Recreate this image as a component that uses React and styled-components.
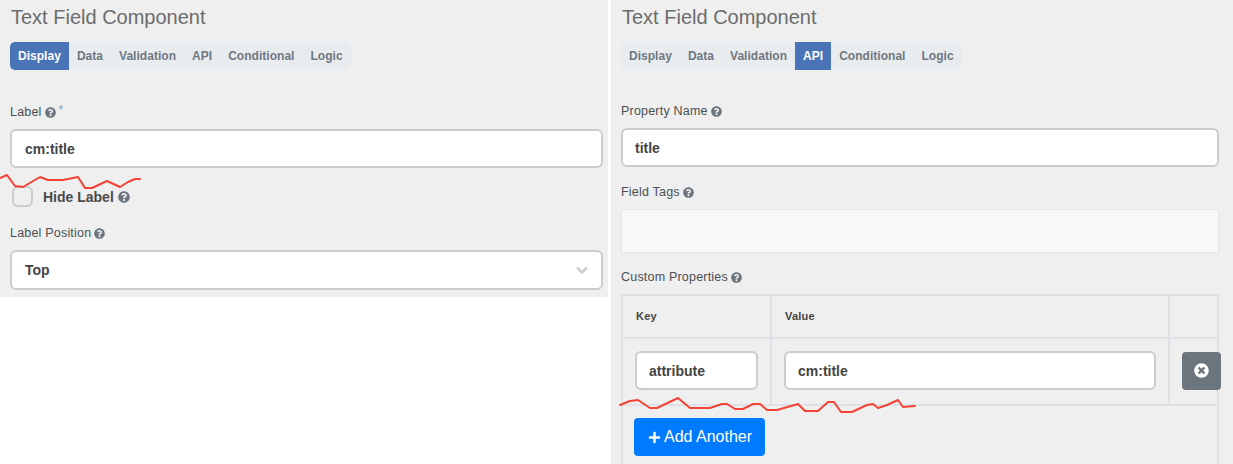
import * as React from 'react';
import styled, { createGlobalStyle } from 'styled-components';
import { FaQuestionCircle, FaTimesCircle, FaPlus } from 'react-icons/fa';

const GlobalStyle = createGlobalStyle`
* { box-sizing: border-box; }
body {
    margin: 0;
    background: #fff;
    font-family: "Liberation Sans", Arial, sans-serif;
}
`;

const Page = styled.div`
display: flex;
gap: 3px;
width: 1233px;
height: 464px;
overflow: hidden;
align-items: flex-start;
`;

const Panel = styled.section`
position: relative;
flex: none;
width: ${(p) => p.$width}px;
height: ${(p) => p.$height}px;
padding: 0 ${(p) => p.$right}px 0 10px;
background-color: #efefef;
overflow: hidden;
`;

const Title = styled.h2`
margin: 0;
height: 34px;
padding-left: 1px;
font-size: 20px;
line-height: 34px;
font-weight: 400;
color: #6c6c6c;
`;

const Tabs = styled.div`
display: inline-flex;
height: 28px;
margin-top: 8px;
background-color: #e9ecef;
border-radius: 5px;
vertical-align: top;
`;

const Tab = styled.div`
padding: 0 8px;
font-size: 12px;
line-height: 28px;
font-weight: 700;
letter-spacing: 0.03px;
color: ${(p) => (p.$active ? '#fff' : '#6f7780')};
background-color: ${(p) => (p.$active ? '#4a74b8' : 'transparent')};
border-radius: ${(p) => (p.$first ? '5px 0 0 5px' : '0')};
`;

const Label = styled.div`
display: flex;
align-items: center;
gap: 3px;
height: 18px;
margin-top: ${(p) => p.$top}px;
font-size: 12.5px;
letter-spacing: 0.2px;
color: #4a4f55;
`;

const Help = styled(FaQuestionCircle)`
flex: none;
width: 11px;
height: 11px;
color: #6c757d;
`;

const Required = styled.span`
margin-top: -4px;
font-size: 12px;
color: #7f9bd0;
`;

const Input = styled.input`
display: block;
width: 100%;
height: 39px;
margin-top: ${(p) => p.$top || 0}px;
padding: 0 ${(p) => p.$pad || 12}px;
font-family: inherit;
font-size: 14px;
font-weight: 700;
color: #444;
background: #fff;
border: 2px solid #ccc;
border-radius: 6px;
outline: none;
`;

const SelectBox = styled.div`
display: flex;
align-items: center;
justify-content: space-between;
height: 40px;
margin-top: 8px;
padding: 0 13px;
font-size: 14px;
font-weight: 700;
color: #444;
background: #fff;
border: 2px solid #ccc;
border-radius: 6px;
`;

const Chevron = styled.svg`
width: 12px;
height: 8px;
fill: none;
stroke: #ccc;
stroke-width: 2.5;
`;

const CheckRow = styled.label`
display: flex;
align-items: center;
height: 21px;
margin-top: 18px;
padding-left: 2px;
font-size: 14px;
font-weight: 700;
color: #4a4a4a;
`;

const CheckBox = styled.span`
flex: none;
width: 21px;
height: 21px;
margin-right: 10px;
border: 2px solid #ccc;
border-radius: 6px;
`;

const CheckHelp = styled(FaQuestionCircle)`
width: 12px;
height: 12px;
margin-left: 4px;
color: #6c757d;
`;

const TagsBox = styled.div`
height: 44px;
margin-top: 8px;
background-color: #f8f8f8;
border: 1px solid #e5e5e5;
border-radius: 2px;
`;

const Table = styled.table`
width: 596px;
margin-top: 8px;
table-layout: fixed;
border-collapse: collapse;
border: 2px solid #dee2e6;
`;

const Th = styled.th`
height: 43px;
padding: 0 13px 1px;
text-align: left;
font-size: 11px;
font-weight: 700;
letter-spacing: 0.2px;
color: #444;
border: 2px solid #dee2e6;
`;

const Td = styled.td`
height: 67px;
padding: 0 12px 2px;
border: 2px solid #dee2e6;
`;

const FootCell = styled.td`
height: 70px;
padding: 12px 11px;
vertical-align: top;
border: 1px solid #dee2e6;
border-top: 2px solid #dee2e6;
`;

// sticks out over the table's right border
const RemoveButton = styled.button`
position: relative;
z-index: 1;
display: flex;
align-items: center;
justify-content: center;
width: 39px;
height: 38px;
padding: 0;
color: #fff;
background-color: #6c757d;
border: none;
border-radius: 4px;
`;

const AddButton = styled.button`
display: inline-flex;
align-items: center;
gap: 3px;
height: 38px;
padding: 0 13px 0 14px;
font-family: inherit;
font-size: 16px;
color: #fff;
background-color: #007bff;
border: none;
border-radius: 4px;
`;

const Scribble = styled.svg`
position: absolute;
top: 0;
left: 0;
width: 100%;
height: 100%;
fill: none;
stroke: #f44336;
stroke-width: 2;
stroke-linejoin: round;
stroke-linecap: round;
pointer-events: none;
z-index: 2;
`;

const tabNames = ['Display', 'Data', 'Validation', 'API', 'Conditional', 'Logic'];

const ComponentTabs = ({ active }) => (
    <Tabs>
        {tabNames.map((name, i) => (
            <Tab key={name} $active={name === active} $first={i === 0}>{name}</Tab>
        ))}
    </Tabs>
);

const App = () => {
    return (
        <>
        <GlobalStyle />
        <Page>
            <Panel $width={608} $height={297} $right={5}>
                <Title>Text Field Component</Title>
                <ComponentTabs active="Display" />
                <Label $top={33}>Label <Help /> <Required>*</Required></Label>
                <Input $top={8} $pad={13} readOnly value="cm:title" />
                <CheckRow><CheckBox />Hide Label <CheckHelp /></CheckRow>
                <Label $top={17}>Label Position <Help /></Label>
                <SelectBox>
                    Top
                    <Chevron viewBox="0 0 12 8"><path d="M1 1.5l5 5 5-5" /></Chevron>
                </SelectBox>
                <Scribble viewBox="0 0 608 297">
                    <polyline points="0,178 7,175 15,186 23,187 40,177 48,180 63,180 78,177 85,188 92,188 107,181 120,187 128,182 135,179 140,179" />
                </Scribble>
            </Panel>
            <Panel $width={622} $height={464} $right={14}>
                <Title>Text Field Component</Title>
                <ComponentTabs active="API" />
                <Label $top={32}>Property Name <Help /></Label>
                <Input $top={8} readOnly value="title" />
                <Label $top={16}>Field Tags <Help /></Label>
                <TagsBox />
                <Label $top={15}>Custom Properties <Help /></Label>
                <Table>
                    <colgroup>
                        <col width="149" />
                        <col width="398" />
                        <col width="49" />
                    </colgroup>
                    <thead>
                        <tr>
                            <Th>Key</Th>
                            <Th>Value</Th>
                            <Th />
                        </tr>
                    </thead>
                    <tbody>
                        <tr>
                            <Td><Input readOnly value="attribute" /></Td>
                            <Td><Input readOnly value="cm:title" /></Td>
                            <Td><RemoveButton><FaTimesCircle size={15} /></RemoveButton></Td>
                        </tr>
                    </tbody>
                    <tfoot>
                        <tr>
                            <FootCell colSpan={3}>
                                <AddButton><FaPlus size={13} />Add Another</AddButton>
                            </FootCell>
                        </tr>
                    </tfoot>
                </Table>
                <Scribble viewBox="0 0 622 464">
                    <polyline points="9,405 19,401 27,400 39,408 46,408 67,398 79,408 99,408 111,404 116,404 124,409 132,409 142,404 149,404 156,410 166,410 187,404 194,411 207,411 217,402 223,402 230,412 241,412 256,405 262,404 267,408 276,405 287,400 292,407 304,406" />
                </Scribble>
            </Panel>
        </Page>
        </>
    );
};

export default App;
